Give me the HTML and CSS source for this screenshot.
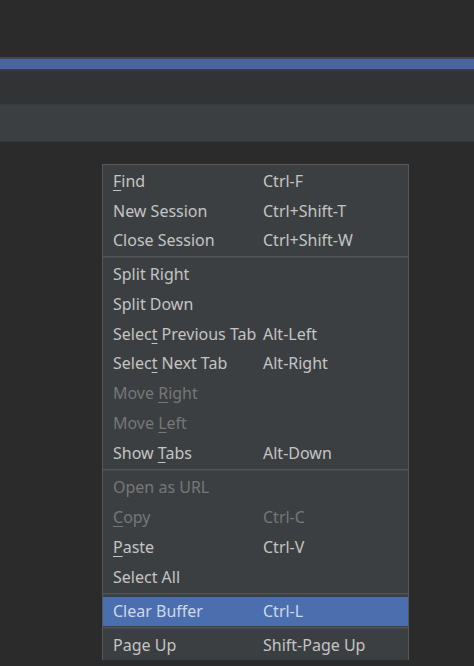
FILE: index.html
```html
<!DOCTYPE html>
<html>
<head>
<meta charset="utf-8">
<link rel="stylesheet" href="styles.css">
</head>
<body>
<div class="top"></div>
<div class="line-a"></div>
<div class="blue"></div>
<div class="line-b"></div>
<div class="band1"></div>
<div class="band-sep"></div>
<div class="band2"></div>
<div class="band-sep2"></div>
<div class="menu">
  <div class="item"><span class="label"><u>F</u>ind</span><span class="key">Ctrl-F</span></div>
  <div class="item"><span class="label">New Session</span><span class="key">Ctrl+Shift-T</span></div>
  <div class="item"><span class="label">Close Session</span><span class="key">Ctrl+Shift-W</span></div>
  <div class="sep"></div>
  <div class="item"><span class="label">Split Right</span><span class="key"></span></div>
  <div class="item"><span class="label">Split Down</span><span class="key"></span></div>
  <div class="item"><span class="label">Selec<u>t</u> Previous Tab</span><span class="key">Alt-Left</span></div>
  <div class="item"><span class="label">Selec<u>t</u> Next Tab</span><span class="key">Alt-Right</span></div>
  <div class="item disabled"><span class="label">Move <u>R</u>ight</span><span class="key"></span></div>
  <div class="item disabled"><span class="label">Move <u>L</u>eft</span><span class="key"></span></div>
  <div class="item"><span class="label">Show <u>T</u>abs</span><span class="key">Alt-Down</span></div>
  <div class="sep wide"></div>
  <div class="item disabled"><span class="label">Open as URL</span><span class="key"></span></div>
  <div class="item disabled"><span class="label"><u>C</u>opy</span><span class="key">Ctrl-C</span></div>
  <div class="item"><span class="label"><u>P</u>aste</span><span class="key">Ctrl-V</span></div>
  <div class="item"><span class="label">Select All</span><span class="key"></span></div>
  <div class="sep wide"></div>
  <div class="item selected"><span class="label">Clear Buffer</span><span class="key">Ctrl-L</span></div>
  <div class="sep"></div>
  <div class="item"><span class="label">Page Up</span><span class="key">Shift-Page Up</span></div>
</div>
</body>
</html>
```
FILE: styles.css
```css
html, body {
  margin: 0;
  padding: 0;
  background: #2b2b2b;
  height: 666px;
  overflow: hidden;
  font-family: "Noto Sans", "Open Sans", sans-serif;
}
.top { height: 57px; background: #2b2b2b; }
.line-a { height: 2px; background: #46464c; }
.blue { height: 10px; background: #4a64a0; }
.line-b { height: 2px; background: #363b4b; }
.band1 { height: 33px; background: #313335; }
.band-sep { height: 1px; background: #393b3d; }
.band2 { height: 36px; background: #3c3f41; }
.band-sep2 { height: 1px; background: #333537; }
.menu {
  margin: 22px 0 0 102px;
  width: 305px;
  background: #3c3f41;
  border: 1px solid #555759;
  border-bottom: none;
  padding-top: 1px;
}
.item {
  display: grid;
  grid-template-columns: 150px 1fr;
  height: 29.75px;
  align-items: center;
  padding-left: 10px;
  font-size: 16px;
  color: #c4c4c4;
  white-space: nowrap;
}
.item u {
  text-decoration-thickness: 1px;
  text-underline-offset: 3px;
}
.item.disabled { color: #75777a; }
.item.selected { background: #4b6eaf; color: #cfd8e8; }
.sep {
  height: 1px;
  margin: 1px 0;
  background: #515456;
  border-bottom: 1px solid #45484a;
}
.sep.wide { margin: 1.5px 0; }
```
